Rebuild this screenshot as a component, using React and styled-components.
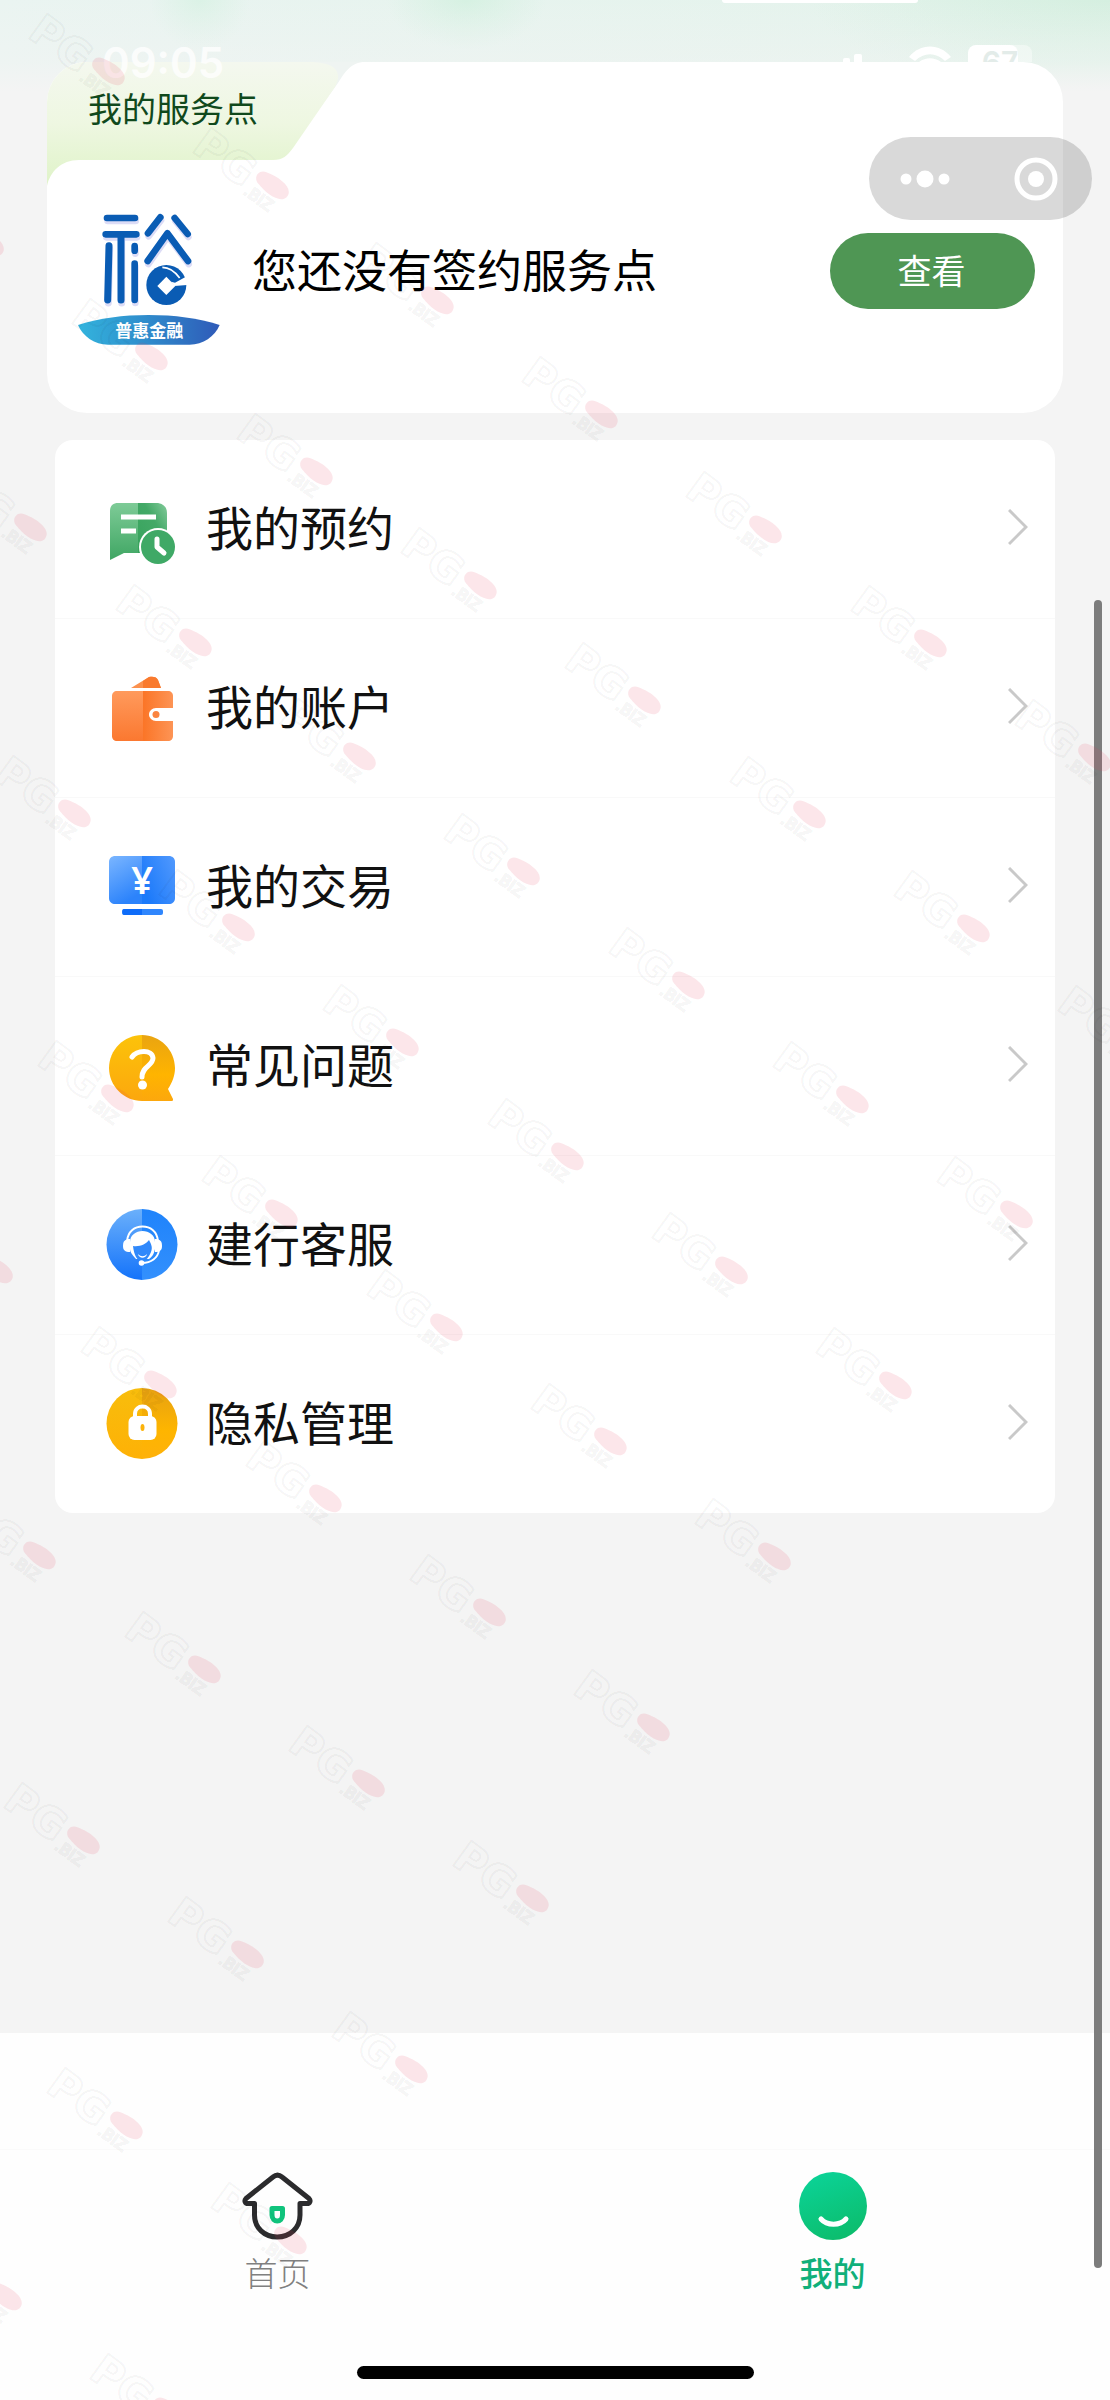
import React from "react";
import styled, { createGlobalStyle } from "styled-components";

const GlobalStyle = createGlobalStyle`
  * {
    box-sizing: border-box;
  }
  body {
    margin: 0;
    background-color: #f4f4f4;
    font-family: "Noto Sans CJK SC", "Noto Sans", sans-serif;
  }
  a {
    color: inherit;
    text-decoration: none;
  }
  svg {
    display: block;
    flex-shrink: 0;
  }
`;

/* ---------- icons ---------- */

const LogoStrokes = () => (
  <g fill="none" strokeLinecap="round" strokeLinejoin="round" strokeWidth="20">
    <path d="M142 84H226M138 133H230" />
    <path d="M148 167L144 330M184 140V330" strokeWidth="21" />
    <path d="M225 168V182M225 221V330" />
    <path d="M302 82L265 130M345 84L384 132" />
    <path d="M264 213L323 130L385 213" />
  </g>
);

const YuLogo = () => (
  <svg width="142" height="148" viewBox="55 21 426 444">
    <defs>
      <linearGradient id="ribbon" x1="0" y1="0" x2="1" y2="0">
        <stop offset="0" stopColor="#33b4dd" />
        <stop offset="0.5" stopColor="#2f8acb" />
        <stop offset="1" stopColor="#2f5ab8" />
      </linearGradient>
    </defs>
    <g stroke="#dcdcf6" transform="translate(2 9)">
      <LogoStrokes />
    </g>
    <g stroke="#0a5cb4">
      <LogoStrokes />
    </g>
    <circle cx="320" cy="285" r="60" fill="#0a5cb4" />
    <path d="M320 260L347 288L320 315L293 288Z" fill="#fff" />
    <path d="M334 275L346 278L376 262L392 250V284L344 288Z" fill="#fff" />
    <path
      d="M308 232C328 232 344 242 360 264"
      fill="none"
      stroke="#fff"
      strokeWidth="5"
    />
    <path
      d="M55 405C120 384 190 375 267 375C345 375 415 384 480 405C465 440 430 464 390 464H145C105 464 70 440 55 405Z"
      fill="url(#ribbon)"
    />
    <text
      x="269"
      y="441"
      textAnchor="middle"
      fontSize="51"
      fontWeight="700"
      fill="#fff"
    >
      普惠金融
    </text>
  </svg>
);

const TabShape = () => (
  <svg width="320" height="124" viewBox="0 0 320 124">
    <defs>
      <linearGradient id="tabFill" x1="0" y1="0" x2="0" y2="1">
        <stop offset="0" stopColor="#f4f8ef" />
        <stop offset="0.5" stopColor="#eef7e1" />
        <stop offset="1" stopColor="#dff3c8" />
      </linearGradient>
    </defs>
    <path d="M240 0H318C304 0 298 10 291 21L270 50Z" fill="#eff4f2" />
    <path
      d="M0 0H262C286 0 297 8 288 25L246 86C240 94 236 98 226 98H32C14 98 3 110 0 124Z"
      fill="url(#tabFill)"
    />
  </svg>
);

const BookingIcon = () => (
  <svg width="72" height="72" viewBox="0 0 72 72">
    <defs>
      <linearGradient id="bookL" x1="0" y1="0" x2="0" y2="1">
        <stop offset="0" stopColor="#7ecb97" />
        <stop offset="1" stopColor="#3fa663" />
      </linearGradient>
      <linearGradient id="bookR" x1="0" y1="1" x2="1" y2="0">
        <stop offset="0" stopColor="#37a35c" />
        <stop offset="0.6" stopColor="#43a967" />
        <stop offset="1" stopColor="#83cb9b" />
      </linearGradient>
    </defs>
    <path d="M32 10H12C7 10 4 13 4 18V67L18 60H32Z" fill="url(#bookL)" />
    <path d="M32 10H50C57 10 61 14 61 20V60H32Z" fill="url(#bookR)" />
    <path d="M15 24H50M15 38H30" stroke="#fff" strokeWidth="5" />
    <circle cx="52" cy="54" r="19" fill="#fff" />
    <circle cx="52" cy="54" r="17" fill="#3fa966" />
    <path
      d="M51 46V54L58 60"
      fill="none"
      stroke="#fff"
      strokeWidth="5"
      strokeLinecap="round"
      strokeLinejoin="round"
    />
  </svg>
);

const WalletIcon = () => (
  <svg width="72" height="72" viewBox="0 0 72 72">
    <defs>
      <linearGradient id="walletL" x1="0" y1="0" x2="0" y2="1">
        <stop offset="0" stopColor="#ff9a5c" />
        <stop offset="1" stopColor="#fb7830" />
      </linearGradient>
      <linearGradient id="walletR" x1="0" y1="0" x2="1" y2="0">
        <stop offset="0" stopColor="#fb7527" />
        <stop offset="1" stopColor="#fd9455" />
      </linearGradient>
    </defs>
    <path d="M25 16L43 5C47 4 51 5 52 8L55 16Z" fill="#fb914e" />
    <path d="M37 9L43 5C47 4 51 5 52 8L55 16H37Z" fill="#f97a2e" />
    <path
      d="M37 19H11C8 19 6 21 6 24V64C6 67 8 69 11 69H37Z"
      fill="url(#walletL)"
    />
    <path
      d="M37 19H62C65 19 67 21 67 24V64C67 67 65 69 62 69H37Z"
      fill="url(#walletR)"
    />
    <path
      d="M68 36H50C46 36 43 39 43 42.5C43 46 46 49 50 49H68Z"
      fill="#fff"
    />
    <circle cx="50" cy="42.5" r="3.5" fill="#fb8440" />
  </svg>
);

const TradeIcon = () => (
  <svg width="72" height="72" viewBox="0 0 72 72">
    <defs>
      <linearGradient id="tradeL" x1="0" y1="0" x2="0.4" y2="1">
        <stop offset="0" stopColor="#7bb6ff" />
        <stop offset="1" stopColor="#2c83fb" />
      </linearGradient>
      <linearGradient id="tradeR" x1="0" y1="0.6" x2="1" y2="0">
        <stop offset="0" stopColor="#1c7afa" />
        <stop offset="1" stopColor="#5199fd" />
      </linearGradient>
    </defs>
    <path d="M36 5H9C6 5 3 7 3 11V47C3 51 6 53 9 53H36Z" fill="url(#tradeL)" />
    <path
      d="M36 5H63C66 5 69 7 69 11V47C69 51 66 53 63 53H36Z"
      fill="url(#tradeR)"
    />
    <rect x="16" y="58" width="41" height="6" rx="2" fill="#2f86fd" />
    <path d="M18 58H36V64H18C16 64 16 58 18 58Z" fill="#0e6cf9" />
    <text
      x="36"
      y="43"
      textAnchor="middle"
      fontFamily="Noto Sans"
      fontSize="38"
      fontWeight="600"
      fill="#fff"
    >
      ¥
    </text>
  </svg>
);

const QuestionIcon = () => (
  <svg width="72" height="72" viewBox="0 0 72 72">
    <defs>
      <linearGradient id="quest" x1="0" y1="0" x2="0" y2="1">
        <stop offset="0" stopColor="#fcc30a" />
        <stop offset="1" stopColor="#fca70d" />
      </linearGradient>
      <linearGradient id="questR" x1="0" y1="0" x2="0" y2="1">
        <stop offset="0" stopColor="#e9a411" />
        <stop offset="0.6" stopColor="#ffb400" />
        <stop offset="1" stopColor="#fca70d" />
      </linearGradient>
    </defs>
    <path d="M36 5C18 5 3 20 3 38C3 56 18 71 36 71Z" fill="url(#quest)" />
    <path
      d="M36 5C54 5 69 20 69 38C69 46 66 53 62 59L67 69C67 70 67 71 66 71H36Z"
      fill="url(#questR)"
    />
    <path
      d="M26 27C31 20 46 19 47 28C47 36 36 36 36 47"
      fill="none"
      stroke="#fff"
      strokeWidth="5"
      strokeLinecap="round"
      strokeLinejoin="round"
    />
    <circle cx="36.5" cy="55" r="4.500" fill="#fff" />
  </svg>
);

const ServiceIcon = () => (
  <svg width="72" height="72" viewBox="0 0 72 72">
    <defs>
      <linearGradient id="servL" x1="0" y1="0" x2="0" y2="1">
        <stop offset="0" stopColor="#6bb0fb" />
        <stop offset="1" stopColor="#1473fa" />
      </linearGradient>
      <linearGradient id="servR" x1="0" y1="0" x2="0" y2="1">
        <stop offset="0" stopColor="#1f83fb" />
        <stop offset="1" stopColor="#3390fd" />
      </linearGradient>
    </defs>
    <path d="M36 0A35.5 35.5 0 0 0 36 71Z" fill="url(#servL)" />
    <path d="M36 0A35.5 35.5 0 0 1 36 71Z" fill="url(#servR)" />
    <path
      d="M21 32C22 22 29 17.500 36.500 17.500C44 17.500 51 22 52 32"
      fill="none"
      stroke="#fff"
      strokeWidth="2"
    />
    <path
      d="M24 33C24 26 30 22 36.500 22C43 22 49 26 49 33V40C48 45 46 48 43 50H30C27 47 24 43 24 40Z"
      fill="#fff"
    />
    <path d="M17 37C17 32 19 30 24 30V43C19 43 17 41 17 37Z" fill="#fff" />
    <path d="M56 37C56 32 54 30 49 30V43C54 43 56 41 56 37Z" fill="#fff" />
    <path
      d="M27 37C34 38 40 35 43 31C45 35 47 38 45 43C43 48 40 52 36 52C31 52 28 46 27 37Z"
      fill="#2f88fb"
    />
    <path d="M32 45C35 48 38 48 41 45C40 50 33 50 32 45Z" fill="#fff" />
    <path
      d="M53 41C52 49 45 54 36 54"
      fill="none"
      stroke="#fff"
      strokeWidth="2"
    />
    <circle cx="35.500" cy="54" r="2.800" fill="#fff" />
  </svg>
);

const LockIcon = () => (
  <svg width="72" height="72" viewBox="0 0 72 72">
    <defs>
      <linearGradient id="lockL" x1="0" y1="0" x2="0" y2="1">
        <stop offset="0" stopColor="#f8bd0c" />
        <stop offset="1" stopColor="#feb106" />
      </linearGradient>
      <linearGradient id="lockR" x1="0" y1="0" x2="0" y2="1">
        <stop offset="0" stopColor="#e6a112" />
        <stop offset="0.6" stopColor="#feb500" />
        <stop offset="1" stopColor="#feb10a" />
      </linearGradient>
    </defs>
    <path d="M36 0A35.5 35.5 0 0 0 36 71Z" fill="url(#lockL)" />
    <path d="M36 0A35.5 35.5 0 0 1 36 71Z" fill="url(#lockR)" />
    <path
      d="M29 31V26C29 16 44 16 44 26V31"
      fill="none"
      stroke="#fff"
      strokeWidth="4"
    />
    <rect x="22.500" y="28" width="28" height="24" rx="6" fill="#fff" />
    <ellipse cx="36.500" cy="39.500" rx="2" ry="3.500" fill="#fcb30a" />
  </svg>
);

const Chevron = () => (
  <svg width="20" height="40" viewBox="0 0 20 40">
    <path d="M1 1L18 18L1 35" fill="none" stroke="#c9c9c9" strokeWidth="3" />
  </svg>
);

const HomeIcon = () => (
  <svg width="72" height="68" viewBox="0 0 72 68">
    <path
      d="M12.500 31.500H6C3 31.500 2 28.500 4 26.500L31 5C34 2.500 37 2.500 40 5L67 26.500C69 28.500 68 31.500 65 31.500H58V43C58 56 48 65 35.200 65C22.500 65 12.500 56 12.500 43Z"
      fill="none"
      stroke="#2b2b2d"
      strokeWidth="5"
      strokeLinejoin="round"
    />
    <path
      d="M30 36.500H40.500V43C40.500 51 30 51 30 43Z"
      fill="none"
      stroke="#10c37c"
      strokeWidth="5"
      strokeLinejoin="round"
    />
  </svg>
);

const MineIcon = () => (
  <svg width="68" height="68" viewBox="0 0 68 68">
    <defs>
      <linearGradient id="mine" x1="0.2" y1="0" x2="0.6" y2="1">
        <stop offset="0" stopColor="#0bd398" />
        <stop offset="1" stopColor="#0cbd6d" />
      </linearGradient>
    </defs>
    <circle cx="34" cy="34" r="34" fill="url(#mine)" />
    <path
      d="M22 47C28 54 41 54 47 47"
      fill="none"
      stroke="#fff"
      strokeWidth="5"
      strokeLinecap="round"
    />
  </svg>
);

const StatusIcons = () => (
  <svg width="194" height="18" viewBox="0 0 194 18">
    <g fill="#fff">
      <rect x="3" y="14" width="7" height="20" rx="2" />
      <rect x="14" y="10" width="8" height="20" rx="2" />
      <path d="M69 13C80 -1 100 -1 111 13L105 17C96 8 84 8 75 17Z" />
      <path d="M79 18C86 13 94 13 101 18Z" />
      <rect x="128" y="1" width="50" height="30" rx="8" />
      <rect x="150" y="1" width="42" height="30" rx="8" opacity="0.4" />
    </g>
    <text
      x="160"
      y="29"
      textAnchor="middle"
      fontFamily="Inter"
      fontSize="30"
      fontWeight="600"
      fill="#e3ece9"
    >
      67
    </text>
  </svg>
);

/* ---------- watermark ---------- */

const marks = [];
for (let row = 0; row < 10; row++) {
  for (let col = 0; col < 8; col++) {
    const x = Math.round(108 + 164.3 * col - 121 * row);
    const y = Math.round(71 + 114.4 * col + 171 * row);
    if (x > -16 && x < 1180) marks.push({ x, y });
  }
}

const Watermark = () => (
  <WatermarkLayer aria-hidden="true">
    {marks.map(({ x, y }) => (
      <g key={`${x}-${y}`} transform={`translate(${x} ${y}) rotate(36)`}>
        <MarkText x="-54" y="20" fontSize="42" fontWeight="700">
          PG
        </MarkText>
        <path
          d="M-12 -7C2 -11 19 -10 19 0C19 10 2 11 -12 7C-20 5 -20 -5 -12 -7Z"
          fill="#e83c60"
          fillOpacity="0.13"
        />
        <MarkText x="-3" y="24" fontSize="16" fontWeight="400">
          .BIZ
        </MarkText>
      </g>
    ))}
  </WatermarkLayer>
);

/* ---------- page ---------- */

const menuItems = [
  { label: "我的预约", Icon: BookingIcon },
  { label: "我的账户", Icon: WalletIcon },
  { label: "我的交易", Icon: TradeIcon },
  { label: "常见问题", Icon: QuestionIcon },
  { label: "建行客服", Icon: ServiceIcon },
  { label: "隐私管理", Icon: LockIcon },
];

const App = () => {
  return (
    <Page>
      <GlobalStyle />
      <BannerEdge />
      <StatusBar>
        <span>09:05</span>
        <StatusIcons />
      </StatusBar>

      <Content>
        <ServiceCard>
          <TabDecoration>
            <TabShape />
          </TabDecoration>
          <CardTab>我的服务点</CardTab>
          <CardBody>
            <YuLogo />
            <CardMessage>您还没有签约服务点</CardMessage>
            <ViewButton type="button">查看</ViewButton>
          </CardBody>
        </ServiceCard>

        <MenuList>
          {menuItems.map(({ label, Icon }) => (
            <MenuItem key={label}>
              <MenuLink href="#">
                <Icon />
                <MenuLabel>{label}</MenuLabel>
                <Chevron />
              </MenuLink>
            </MenuItem>
          ))}
        </MenuList>
      </Content>

      <BottomArea>
        <TabBar>
          <TabLink href="#">
            <HomeIcon />
            首页
          </TabLink>
          <TabLink href="#" $active>
            <MineIcon />
            我的
          </TabLink>
        </TabBar>
        <HomeIndicator />
      </BottomArea>

      <Capsule>
        <CapsuleButton type="button" aria-label="更多">
          <svg width="50" height="20" viewBox="0 0 50 20" fill="#fff">
            <circle cx="6" cy="10" r="5.500" />
            <circle cx="25" cy="10" r="8.500" />
            <circle cx="44" cy="10" r="5.500" />
          </svg>
        </CapsuleButton>
        <CapsuleButton type="button" aria-label="关闭">
          <svg width="44" height="44" viewBox="0 0 44 44">
            <circle
              cx="22"
              cy="22"
              r="19"
              fill="none"
              stroke="#fff"
              strokeWidth="5"
            />
            <circle cx="22" cy="22" r="8" fill="#fff" />
          </svg>
        </CapsuleButton>
      </Capsule>
      <ScrollThumb />
      <Watermark />
    </Page>
  );
};

const Page = styled.div`
  position: relative;
  display: flex;
  flex-direction: column;
  min-height: 100vh;
  overflow: hidden;
  background:
    linear-gradient(
      to bottom,
      rgba(244, 244, 244, 0) 0,
      rgba(244, 244, 244, 0.4) 62px,
      #f4f4f4 92px
    ),
    radial-gradient(ellipse 80px 50px at 42% 0, #d6f1e2, transparent),
    radial-gradient(ellipse 50px 50px at 18% 0, #dbf2e6, transparent),
    radial-gradient(ellipse 300px 90px at 100% 0, #d5efe0, transparent),
    linear-gradient(to right, #eaf4f1, #e3f3eb);
`;

const BannerEdge = styled.div`
  position: absolute;
  top: 0;
  left: 65%;
  width: 196px;
  height: 3px;
  border-radius: 0 0 12px 12px;
  background-color: #fff;
`;

const StatusBar = styled.div`
  position: absolute;
  z-index: 2;
  top: 0;
  left: 0;
  right: 0;
  display: flex;
  justify-content: space-between;
  align-items: flex-start;
  padding: 44px 76px 0 102px;
  color: rgba(255, 255, 255, 0.8);
  font-family: Inter, sans-serif;
  font-size: 42px;
  font-weight: 600;
  line-height: 38px;
`;

const Content = styled.main`
  flex: 1;
  padding: 62px 47px 0;
`;

const ServiceCard = styled.section`
  position: relative;
  overflow: hidden;
  border-radius: 40px;
  background-color: #fff;
`;

const TabDecoration = styled.div`
  position: absolute;
  top: 0;
  left: 0;
`;

const CardTab = styled.h2`
  position: relative;
  margin: 0;
  padding: 22px 41px 0;
  height: 98px;
  color: #10491c;
  font-size: 34px;
  font-weight: 400;
  line-height: 48px;
`;

const CardBody = styled.div`
  position: relative;
  display: flex;
  align-items: center;
  gap: 32px;
  padding: 37px 28px 68px 31px;
`;

const CardMessage = styled.p`
  flex: 1;
  margin: 0;
  padding-bottom: 4px;
  color: #000;
  font-size: 45px;
  line-height: 64px;
`;

const ViewButton = styled.button`
  width: 205px;
  height: 76px;
  padding: 0 2px 2px 0;
  border: none;
  border-radius: 38px;
  background-color: #4f9654;
  color: #fff;
  font-family: inherit;
  font-size: 34px;
  line-height: 48px;
  cursor: pointer;
`;

const MenuList = styled.ul`
  margin: 27px 8px 0;
  padding: 0;
  border-radius: 18px;
  background-color: #fff;
  list-style: none;
`;

const MenuItem = styled.li`
  & + & {
    border-top: 1px solid #f9f9f9;
  }
`;

const MenuLink = styled.a`
  display: flex;
  align-items: center;
  gap: 28px;
  height: 178px;
  padding: 0 27px 0 51px;
`;

const MenuLabel = styled.span`
  flex: 1;
  padding-bottom: 6px;
  color: #111;
  font-size: 47px;
  line-height: 64px;
`;

const BottomArea = styled.footer`
  padding-top: 116px;
  background-color: #fefefe;
`;

const TabBar = styled.nav`
  display: flex;
  padding-top: 22px;
  border-top: 1px solid #fafafa;
`;

const TabLink = styled.a`
  flex: 1;
  display: flex;
  flex-direction: column;
  align-items: center;
  gap: 8px;
  color: ${(props) => (props.$active ? "#10b07a" : "#808080")};
  font-size: 33px;
  font-weight: ${(props) => (props.$active ? 500 : 300)};
  line-height: 48px;
`;

const HomeIndicator = styled.div`
  width: 397px;
  height: 13px;
  margin: 70px auto 21px;
  border-radius: 7px;
  background-color: #000;
`;

const Capsule = styled.div`
  position: absolute;
  z-index: 3;
  top: 137px;
  right: 18px;
  display: flex;
  justify-content: space-between;
  align-items: center;
  width: 223px;
  height: 83px;
  padding: 0 34px 0 31px;
  border-radius: 42px;
  background-color: rgba(0, 0, 0, 0.15);
`;

const CapsuleButton = styled.button`
  padding: 0;
  border: none;
  background: none;
  cursor: pointer;
`;

const ScrollThumb = styled.div`
  position: absolute;
  top: 25%;
  right: 8px;
  bottom: 132px;
  width: 8px;
  border-radius: 4px;
  background-color: #7c7c7c;
`;

const WatermarkLayer = styled.svg`
  position: absolute;
  z-index: 4;
  inset: 0;
  width: 100%;
  height: 100%;
  pointer-events: none;
`;

const MarkText = styled.text`
  font-family: "DejaVu Sans", sans-serif;
  text-anchor: middle;
  fill: rgba(0, 0, 0, 0.01);
  stroke: rgba(0, 0, 0, 0.05);
  stroke-width: 2px;
`;

export default App;
